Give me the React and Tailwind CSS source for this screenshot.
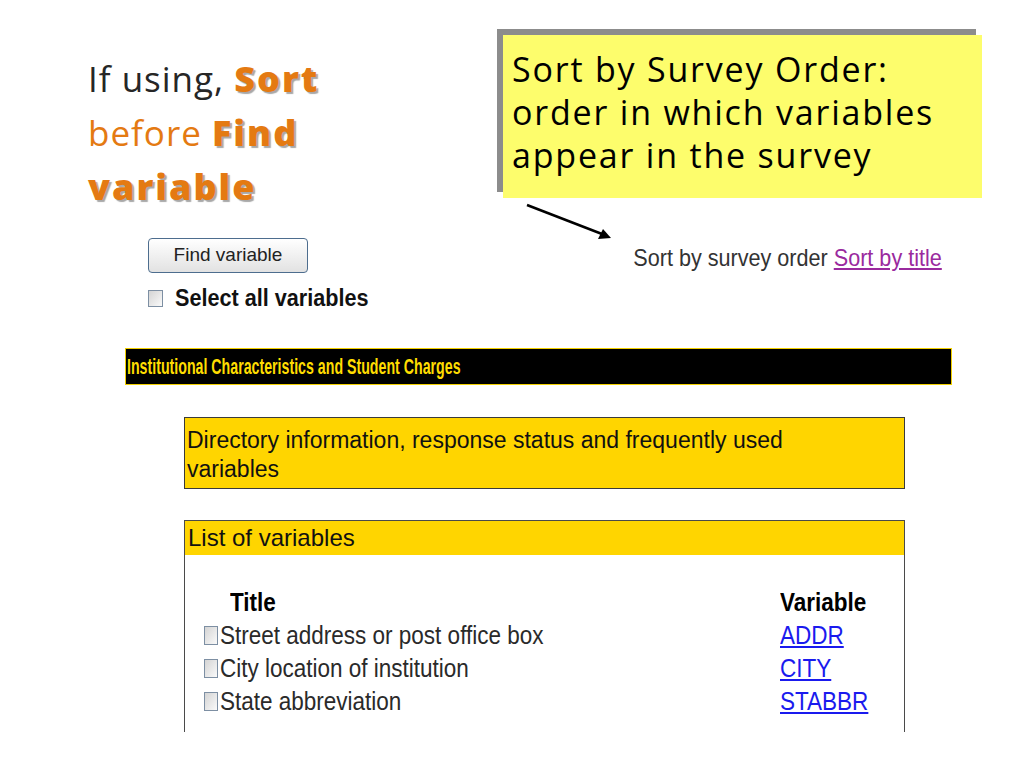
const arial = { fontFamily: '"Liberation Sans", Arial, sans-serif' }
const slideFont = { fontFamily: '"Open Sans", Lato, sans-serif' }

const rows = [
  { title: 'Street address or post office box', code: 'ADDR' },
  { title: 'City location of institution', code: 'CITY' },
  { title: 'State abbreviation', code: 'STABBR' },
]

// the page screenshot in the slide is squeezed sideways, so text is narrowed
function Sq({ className = '', children }) {
  return <span className={`inline-block whitespace-nowrap origin-left ${className}`}>{children}</span>
}

function Box({ size }) {
  return (
    <span className={`${size} inline-block shrink-0 border border-[#7d8fa3] bg-gradient-to-br from-[#d4d4d4] to-[#fafafa]`} />
  )
}

const heavy = 'text-[#e47a12] font-extrabold text-[36px] tracking-[2px] [text-shadow:2px_2px_1px_#a8a8a8]'

export default function App() {
  return (
    <div className="w-[1024px] h-[768px] bg-white overflow-hidden text-black relative">
      {/* Top: slide title + callout */}
      <div className="flex h-[238px] items-start">
        <div style={slideFont} className="pl-[88px] pt-[52px] text-[35px] leading-[54px] text-[#262626] tracking-[1px]">
          <div>
            If using, <b className={heavy}>Sort</b>
          </div>
          <div className="text-[#e47a12]">
            before <b className={heavy}>Find</b>
          </div>
          <div className={heavy}>variable</div>
        </div>

        <div className="ml-auto mr-[42px] mt-[29px] w-[485px] h-[169px] pl-[6px] pt-[6px] bg-[linear-gradient(#8c8c8c,#8c8c8c)] bg-no-repeat bg-[length:479px_163px]">
          <div style={slideFont} className="w-[479px] h-[163px] bg-[#fdfd6c] pl-[9px] pt-[13px] text-[34px] leading-[43px] tracking-[1.8px]">
            Sort by Survey Order:<br />
            order in which variables<br />
            appear in the survey
          </div>
        </div>
      </div>

      {/* arrow */}
      <svg className="absolute left-[520px] top-[200px]" width="100" height="45" viewBox="0 0 100 45">
        <line x1="7" y1="5" x2="82" y2="34" stroke="#000" strokeWidth="2.5" />
        <path d="M91 38 L78 39 L83 29 Z" fill="#000" />
      </svg>

      {/* Find / sort row */}
      <div style={arial} className="flex items-start pl-[148px] pr-[82px]">
        <div className="flex flex-col">
          <button className="w-[160px] h-[35px] rounded-[4px] border border-[#4d6d8e] bg-gradient-to-b from-white to-[#e2e2e2] text-[19px] text-[#222]">
            Find variable
          </button>
          <label className="flex items-center mt-[14px] gap-[12px] h-[22px]">
            <Box size="w-[15px] h-[17px]" />
            <Sq className="font-bold text-[23px] leading-none scale-x-[0.94] text-[#111]">Select all variables</Sq>
          </label>
        </div>
        <div className="ml-auto mt-[6px] text-[24px] leading-[28px] text-[#333] whitespace-nowrap origin-right scale-x-[0.9]">
          Sort by survey order <a href="#" className="text-[#9a2a9e] underline">Sort by title</a>
        </div>
      </div>

      {/* section bar */}
      <div style={arial} className="ml-[125px] mr-[72px] mt-[39px] h-[37px] bg-black border border-[#f2d000] flex items-center pl-[1px]">
        <Sq className="text-[#ffdd00] font-bold text-[22px] scale-x-[0.645]">Institutional Characteristics and Student Charges</Sq>
      </div>

      {/* Directory box */}
      <div style={arial} className="ml-[184px] mr-[119px] mt-[32px] h-[72px] bg-[#ffd500] border border-[#3a3a3a] pl-[2px] pt-[8px] text-[23px] leading-[29px] text-[#111]">
        Directory information, response status and frequently used<br />variables
      </div>

      {/* List of variables */}
      <div style={arial} className="ml-[184px] mr-[119px] mt-[31px] h-[212px] border border-b-0 border-[#4a4a4a]">
        <div className="h-[34px] bg-[#ffd500] pl-[3px] flex items-center text-[24px] text-[#111]">List of variables</div>
        <div className="pl-[19px] pr-[35px] pt-[31px] text-[25px] leading-[33px]">
          <div className="flex font-bold h-[33px] items-center">
            <Sq className="ml-[26px] scale-x-[0.9]">Title</Sq>
            <Sq className="ml-auto w-[89px] scale-x-[0.9]">Variable</Sq>
          </div>
          {rows.map((r) => (
            <div key={r.code} className="flex items-center h-[33px] text-[#2a2a2a]">
              <Box size="w-[14px] h-[19px]" />
              <Sq className="ml-[2px] scale-x-[0.9]">{r.title}</Sq>
              <Sq className="ml-auto w-[89px] scale-x-[0.9]">
                <a href="#" className="text-[#1a1aee] underline">{r.code}</a>
              </Sq>
            </div>
          ))}
        </div>
      </div>
    </div>
  )
}
